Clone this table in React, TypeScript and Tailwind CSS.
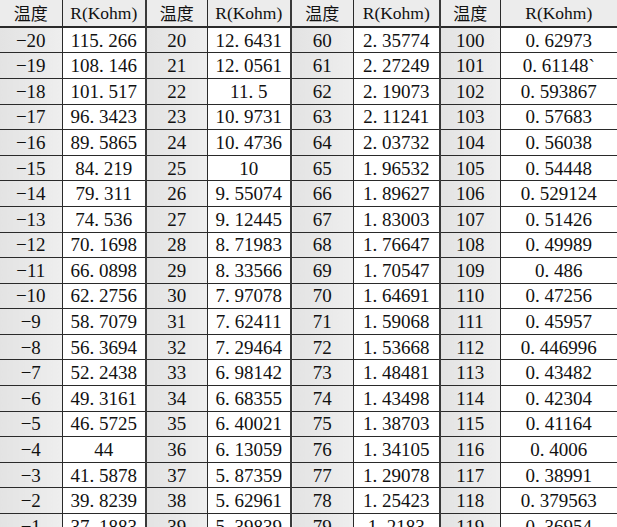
const rows: string[][] = [
  ["−20", "115.266", "20", "12.6431", "60", "2.35774", "100", "0.62973"],
  ["−19", "108.146", "21", "12.0561", "61", "2.27249", "101", "0.61148`"],
  ["−18", "101.517", "22", "11.5", "62", "2.19073", "102", "0.593867"],
  ["−17", "96.3423", "23", "10.9731", "63", "2.11241", "103", "0.57683"],
  ["−16", "89.5865", "24", "10.4736", "64", "2.03732", "104", "0.56038"],
  ["−15", "84.219", "25", "10", "65", "1.96532", "105", "0.54448"],
  ["−14", "79.311", "26", "9.55074", "66", "1.89627", "106", "0.529124"],
  ["−13", "74.536", "27", "9.12445", "67", "1.83003", "107", "0.51426"],
  ["−12", "70.1698", "28", "8.71983", "68", "1.76647", "108", "0.49989"],
  ["−11", "66.0898", "29", "8.33566", "69", "1.70547", "109", "0.486"],
  ["−10", "62.2756", "30", "7.97078", "70", "1.64691", "110", "0.47256"],
  ["−9", "58.7079", "31", "7.62411", "71", "1.59068", "111", "0.45957"],
  ["−8", "56.3694", "32", "7.29464", "72", "1.53668", "112", "0.446996"],
  ["−7", "52.2438", "33", "6.98142", "73", "1.48481", "113", "0.43482"],
  ["−6", "49.3161", "34", "6.68355", "74", "1.43498", "114", "0.42304"],
  ["−5", "46.5725", "35", "6.40021", "75", "1.38703", "115", "0.41164"],
  ["−4", "44", "36", "6.13059", "76", "1.34105", "116", "0.4006"],
  ["−3", "41.5878", "37", "5.87359", "77", "1.29078", "117", "0.38991"],
  ["−2", "39.8239", "38", "5.62961", "78", "1.25423", "118", "0.379563"],
  ["−1", "37.1883", "39", "5.39839", "79", "1.2183", "119", "0.36954"],
];

const widths = ["w-[62px]", "w-[84px]", "w-[61px]", "w-[84px]", "w-[62px]", "w-[87px]", "w-[60px]", "w-[117px]"];

// SimSun-style half-width dot: the period takes a full digit cell
const Num = ({ v }: { v: string }) => {
  const [a, b] = v.split(".");
  return (
    <>
      {a}
      {b !== undefined && (
        <>
          <span className="inline-block w-[0.5em] text-left">.</span>
          {b}
        </>
      )}
    </>
  );
};

const borderFor = (i: number) =>
  i === 7 ? "" : i % 2 === 1 ? "border-r-2 border-r-[#3a3a3a]" : "border-r border-r-[#2a2a2a]";

export default function App() {
  return (
    <div className="w-[617px] h-[527px] overflow-hidden bg-white">
      <table className="table-fixed w-[617px] border-collapse text-[#111]">
        <colgroup>
          {widths.map((w, i) => (
            <col key={i} className={w} />
          ))}
        </colgroup>
        <thead>
          <tr className="h-[27px] bg-[#ececec] border-b-2 border-b-[#2a2a2a]">
            {widths.map((_, i) => (
              <th
                key={i}
                className={`p-0 font-normal text-center ${borderFor(i)} ${
                  i % 2 === 0
                    ? "text-[17px] font-['Noto_Sans_CJK_SC',sans-serif]"
                    : "text-[17.5px] font-['Liberation_Serif',serif]"
                }`}
              >
                {i % 2 === 0 ? "温度" : "R(Kohm)"}
              </th>
            ))}
          </tr>
        </thead>
        <tbody>
          {rows.map((r, ri) => (
            <tr key={ri} className="h-[25.6px] border-b border-b-[#2a2a2a]">
              {r.map((c, i) => (
                <td
                  key={i}
                  className={`p-0 text-center text-[19px] leading-none whitespace-nowrap font-['Liberation_Serif',serif] ${borderFor(i)} ${
                    i % 2 === 0 ? "bg-gradient-to-r from-[#e3e3e3] to-[#eeeeee]" : "bg-white"
                  }`}
                >
                  <Num v={c} />
                </td>
              ))}
            </tr>
          ))}
        </tbody>
      </table>
    </div>
  );
}
